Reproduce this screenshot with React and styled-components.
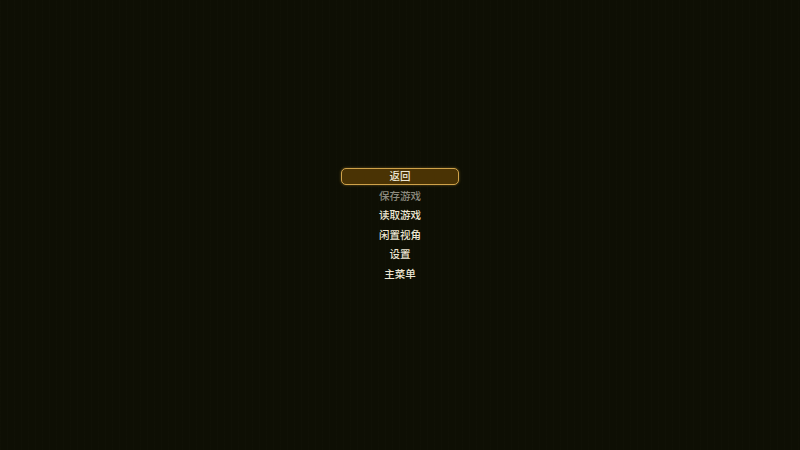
import React from 'react'
import styled, { createGlobalStyle } from 'styled-components'

const GlobalStyle = createGlobalStyle`
  html, body {
    margin: 0;
    padding: 0;
    background: #0e0f04;
  }
`;

const Screen = styled.div`
  width: 800px;
  height: 450px;
  background-color: #0e0f04;
  background-image: repeating-linear-gradient(
    90deg,
    rgba(255, 255, 230, 0.008) 0px,
    rgba(255, 255, 230, 0.008) 1px,
    transparent 1px,
    transparent 7px
  );
  display: flex;
  justify-content: center;
  padding-top: 167.5px;
  box-sizing: border-box;
`;

const Menu = styled.ul`
  list-style: none;
  margin: 0;
  padding: 0;
  display: flex;
  flex-direction: column;
  align-items: center;
  gap: 2.6px;
`;

const Item = styled.li`
  width: 118px;
  height: 17px;
  padding-bottom: 1px;
  box-sizing: border-box;
  display: flex;
  align-items: center;
  justify-content: center;
  font-family: "Noto Sans CJK SC", "Noto Sans", sans-serif;
  font-size: 10.5px;
  font-weight: 500;
  color: ${p => (p.disabled ? '#8c8a7e' : '#ece6d2')};
  border-radius: 5px;
  border: 1.5px solid ${p => (p.active ? '#cfa24a' : 'transparent')};
  background: ${p => (p.active ? '#4a3304' : 'transparent')};
  box-shadow: ${p => (p.active ? '0 0 3px rgba(212, 166, 64, 0.45)' : 'none')};
  cursor: pointer;
`;

const items = [
  { label: '返回', active: true },
  { label: '保存游戏', disabled: true },
  { label: '读取游戏' },
  { label: '闲置视角' },
  { label: '设置' },
  { label: '主菜单' },
];

const App = () => {
  return (
    <>
      <GlobalStyle />
      <Screen>
        <Menu>
          {items.map(it => (
            <Item key={it.label} active={it.active} disabled={it.disabled}>
              {it.label}
            </Item>
          ))}
        </Menu>
      </Screen>
    </>
  )
}

export default App
